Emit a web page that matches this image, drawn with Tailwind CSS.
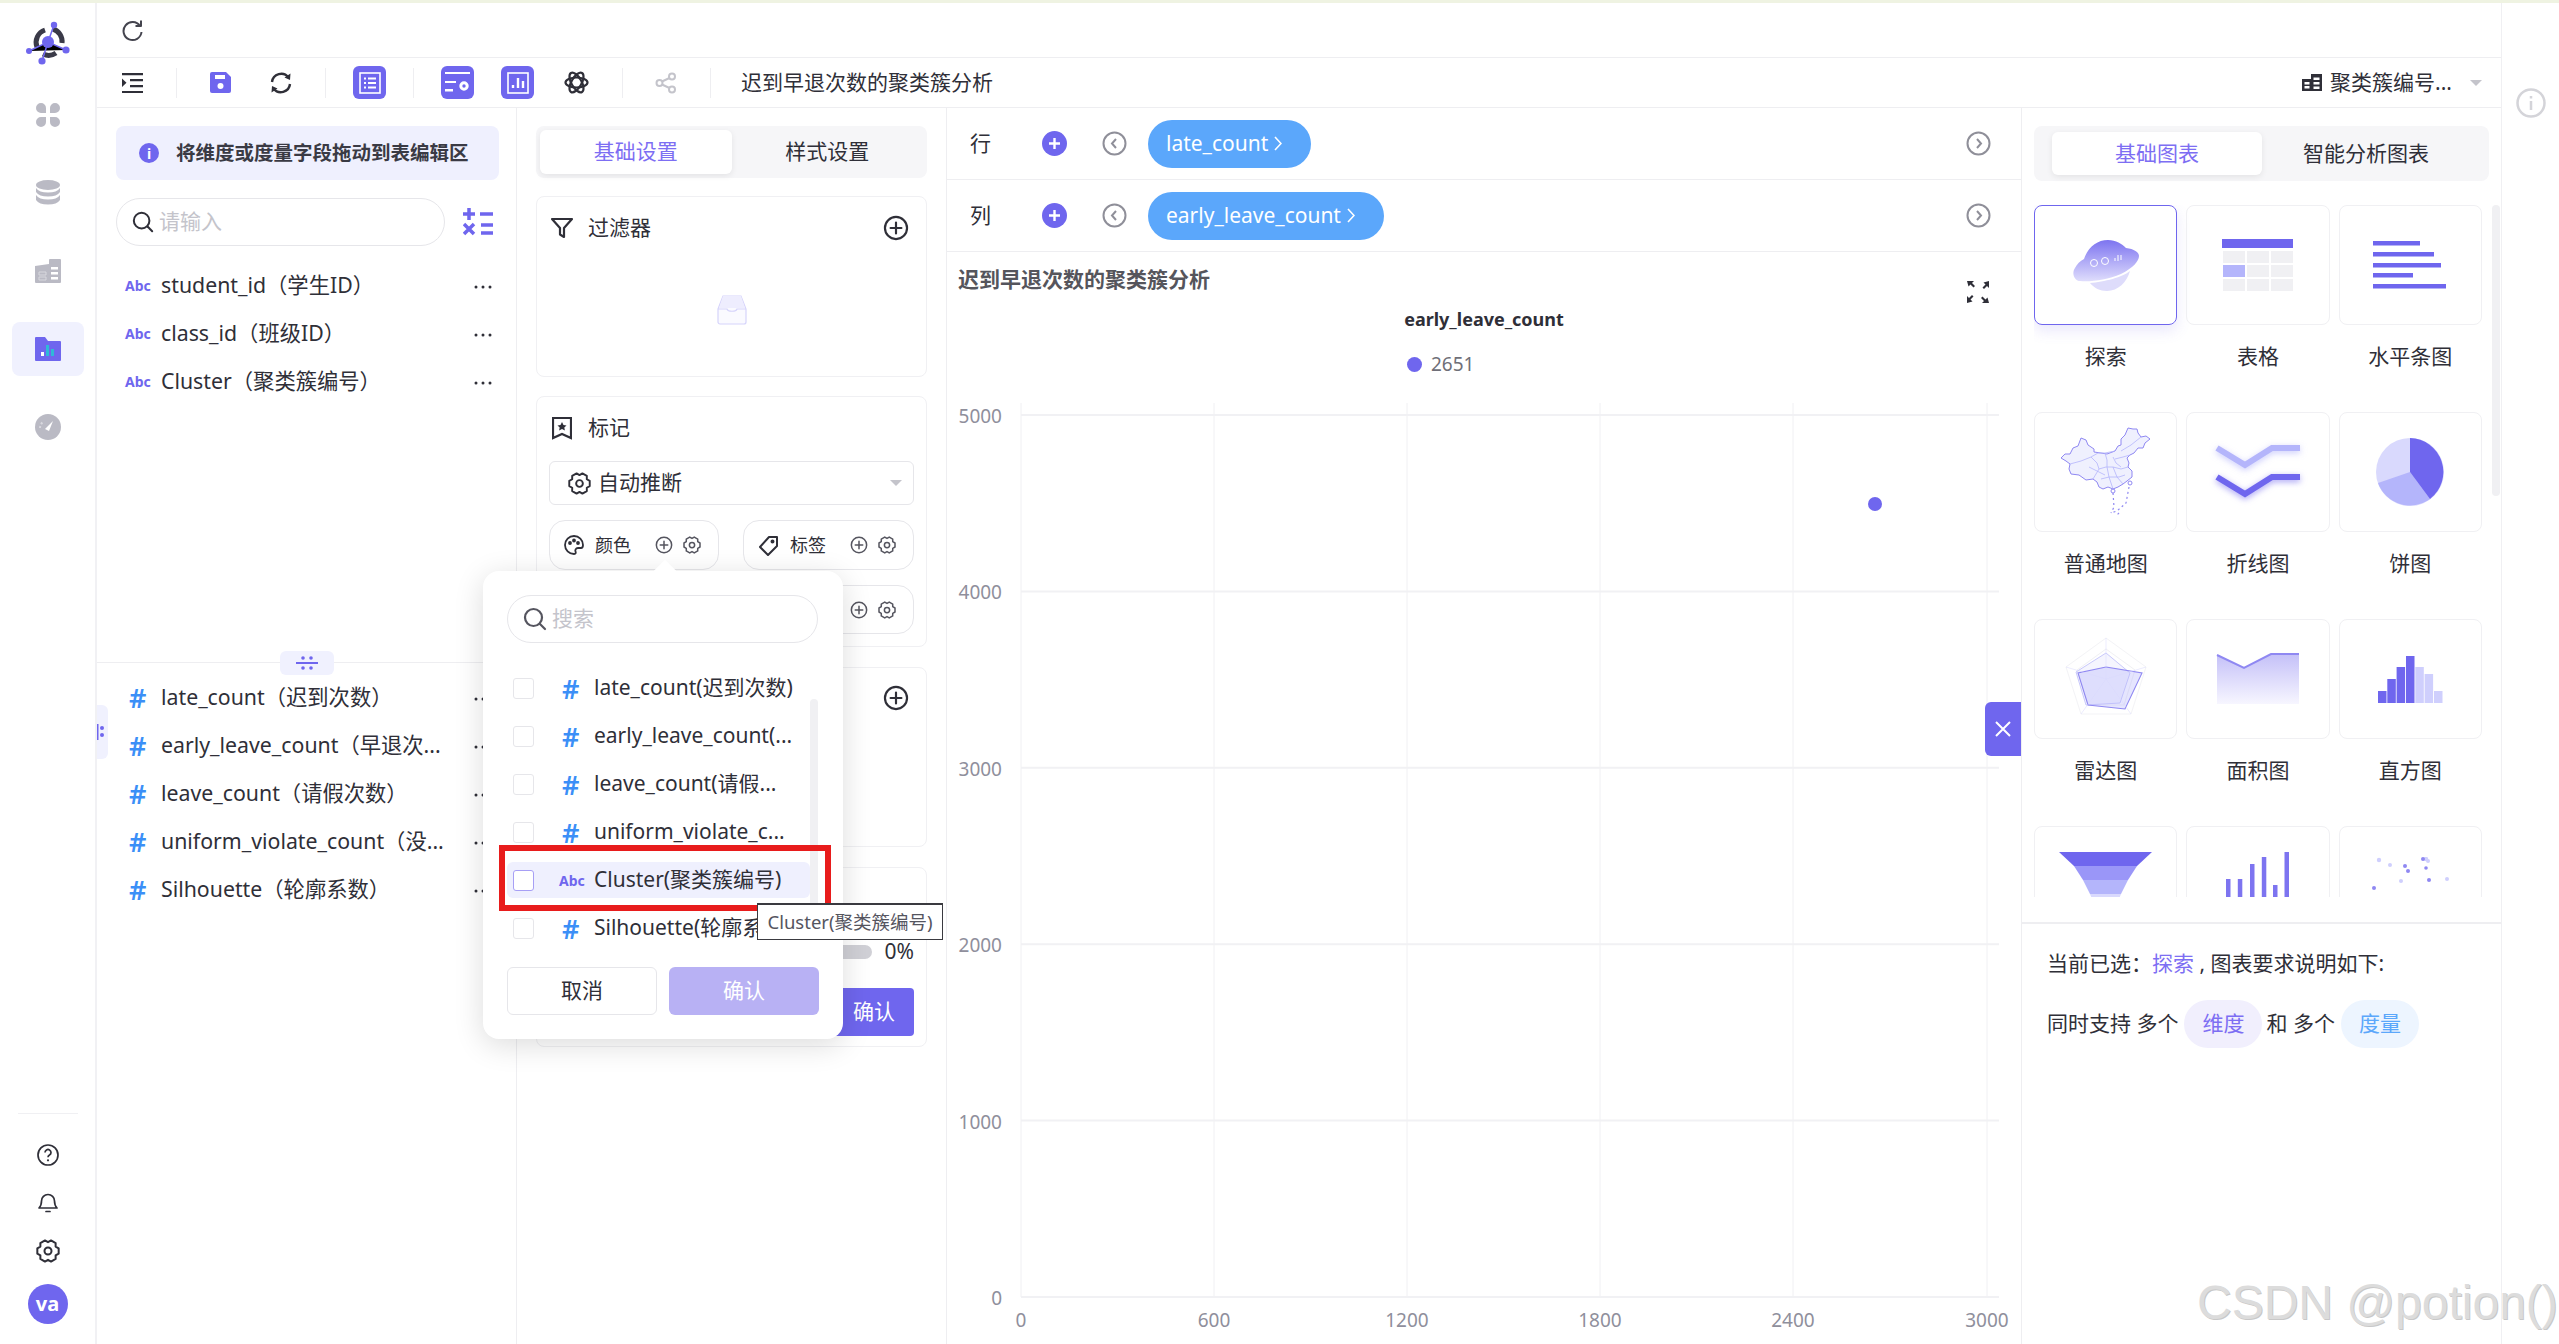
<!DOCTYPE html>
<html lang="zh">
<head>
<meta charset="UTF-8">
<title>迟到早退次数的聚类簇分析</title>
<script src="https://cdn.jsdelivr.net/npm/@tailwindcss/browser@4"></script>
</head>
<body class="bg-white text-[#2f2f38] [font-family:'Noto_Sans','Noto_Sans_CJK_SC',sans-serif]">

<!-- shared icons -->
<svg class="hidden">
  <symbol id="gear" viewBox="0 0 24 24"><path d="M22.670 9.340V14.660L19.620 16.400 19.640 19.910 15.030 22.570 12 20.800 8.970 22.570 4.360 19.910 4.380 16.400 1.330 14.660V9.340L4.380 7.600 4.360 4.090 8.970 1.430 12 3.200 15.030 1.430 19.640 4.090 19.620 7.600z" fill="none" stroke="currentColor" stroke-width="2" stroke-linejoin="round"/><circle cx="12" cy="12" r="3.500" fill="none" stroke="currentColor" stroke-width="2"/></symbol>
  <symbol id="plus-o" viewBox="0 0 24 24"><circle cx="12" cy="12" r="10.200" fill="none" stroke="currentColor" stroke-width="2"/><path d="M12 7v10M7 12h10" stroke="currentColor" stroke-width="2" stroke-linecap="round"/></symbol>
  <symbol id="dots" viewBox="0 0 18 4"><circle cx="2" cy="2" r="1.500" fill="currentColor"/><circle cx="9" cy="2" r="1.500" fill="currentColor"/><circle cx="16" cy="2" r="1.500" fill="currentColor"/></symbol>
  <symbol id="search" viewBox="0 0 24 24"><circle cx="10.500" cy="10.500" r="8.500" fill="none" stroke="currentColor" stroke-width="2.200"/><path d="M17 17l5 5" stroke="currentColor" stroke-width="2.200" stroke-linecap="round"/></symbol>
</svg>

<div class="relative w-[2559px] h-[1344px] overflow-hidden">
  <div class="h-[3px] bg-[#eff3e2]"></div>

  <div class="flex h-[1341px]">
    <!-- sidebar -->
    <aside class="w-[97px] shrink-0 border-r-2 border-[#f1f1f4] flex flex-col items-center">
      <svg class="mt-[18px] w-[46px] h-[46px]" viewBox="0 0 46 46">
        <path d="M12 26a13 13 0 0 1 8-17M28 8a13 13 0 0 1 9 14M31 32a13 13 0 0 1-13 1" fill="none" stroke="#3a3a48" stroke-width="5"/>
        <path d="M29 4L23 21M4 30l19-9 18 8M17 40l6-19" stroke="#6f66ee" stroke-width="1.500"/>
        <circle cx="23" cy="21" r="6" fill="#6f66ee"/><circle cx="29" cy="4" r="3.200" fill="#6f66ee"/><circle cx="41" cy="29" r="3.600" fill="#6f66ee"/><circle cx="4" cy="30" r="3" fill="#6f66ee"/><circle cx="17" cy="40" r="3.600" fill="#6f66ee"/>
      </svg>
      <svg class="mt-[35px] w-[26px] h-[26px]" viewBox="0 0 26 26" fill="#babac4"><path d="M1 6a5 5 0 0 1 10 0v5H6a5 5 0 0 1-5-5zM15 6a5 5 0 0 1 10 0 5 5 0 0 1-5 5h-5zM1 20a5 5 0 0 1 5-5h5v5a5 5 0 0 1-10 0zM15 15h5a5 5 0 0 1 0 10 5 5 0 0 1-5-5z"/></svg>
      <svg class="mt-[52px] w-[26px] h-[26px]" viewBox="0 0 26 26" fill="#babac4"><ellipse cx="13" cy="5" rx="12" ry="5"/><path d="M1 8c2 3 6 4.500 12 4.500S23 11 25 8v4c-2 3-6 4.500-12 4.500S3 15 1 12zM1 15c2 3 6 4.500 12 4.500S23 18 25 15v5c-2 3-6 4.500-12 4.500S3 23 1 20z"/></svg>
      <svg class="mt-[53px] w-[26px] h-[24px]" viewBox="0 0 26 24"><path d="M0 7l14-2V1a1 1 0 0 1 1-1h10a1 1 0 0 1 1 1v22a1 1 0 0 1-1 1H1a1 1 0 0 1-1-1z" fill="#babac4"/><path d="M16 8h7v2.500h-7zM16 13h7v2.500h-7zM16 18h7v2.500h-7z" fill="#fff"/><path d="M4 13h7v3H4zM4 18h7v3H4z" fill="none" stroke="#d8d8de"/></svg>
      <div class="mt-[39px] w-[72px] h-[54px] rounded-lg bg-[#f0f1fe] flex items-center justify-center">
        <svg class="w-[26px] h-[24px]" viewBox="0 0 26 24"><path d="M0 1a1 1 0 0 1 1-1h9l3 4h12a1 1 0 0 1 1 1v18a1 1 0 0 1-1 1H1a1 1 0 0 1-1-1z" fill="#6f66ee"/><rect x="6" y="15" width="3" height="4" fill="#fff"/><rect x="11" y="8" width="3" height="11" fill="#2fb9d8"/><rect x="16" y="12" width="3" height="7" fill="#2fb9d8"/></svg>
      </div>
      <svg class="mt-[38px] w-[26px] h-[26px]" viewBox="0 0 26 26"><circle cx="13" cy="13" r="13" fill="#babac4"/><path d="M10 15l8-8-4 10z" fill="#fff"/><path d="M5 14a8 8 0 0 1 3-6" stroke="#d8d8de" stroke-width="2" fill="none" stroke-dasharray="2 2"/></svg>

      <div class="mt-auto w-[60px] border-t border-[#f0f0f3]"></div>
      <svg class="mt-[30px] w-[22px] h-[22px] text-[#2f2f38]" viewBox="0 0 22 22"><circle cx="11" cy="11" r="10" fill="none" stroke="currentColor" stroke-width="1.700"/><path d="M8 8.500a3 3 0 1 1 4.500 2.600c-1 .6-1.500 1.100-1.500 2.200" fill="none" stroke="currentColor" stroke-width="1.700"/><circle cx="11" cy="16.300" r="1.100" fill="currentColor"/></svg>
      <svg class="mt-[25px] w-[22px] h-[22px] text-[#2f2f38]" viewBox="0 0 22 22" fill="none" stroke="currentColor" stroke-width="1.700"><path d="M2 17h18c-2-2-2.500-4-2.500-7a6.500 6.500 0 0 0-13 0c0 3-.5 5-2.500 7z" stroke-linejoin="round"/><path d="M9 20.500h4" stroke-linecap="round"/></svg>
      <svg class="mt-[26px] w-[24px] h-[24px] text-[#2f2f38]"><use href="#gear"/></svg>
      <div class="mt-[21px] mb-[20px] w-[40px] h-[40px] rounded-full bg-[#6f66ee] text-white font-bold text-[20px] flex items-center justify-center">va</div>
    </aside>

    <!-- main -->
    <div class="w-[2405px] shrink-0 border-r border-[#f0f0f3] flex flex-col">
      <div class="h-[55px] shrink-0 border-b border-[#eeeef1] flex items-center pl-[23px]">
        <svg class="w-[24px] h-[24px] text-[#44444e]" viewBox="0 0 24 24" fill="none" stroke="currentColor" stroke-width="2"><path d="M20 8a9 9 0 1 0 1.500 6"/><path d="M21 2.500V8h-5.500" stroke-linejoin="round"/></svg>
      </div>

      <!-- toolbar -->
      <div class="h-[50px] shrink-0 border-b border-[#eeeef1] flex items-center relative">
        <svg class="ml-[25px] w-[21px] h-[20px] text-[#2f2f38]" viewBox="0 0 21 20" fill="currentColor"><path d="M0 0h21v2.200H0zM8 6h13v2.200H8zM8 12h13v2.200H8zM0 18h21v2H0zM0 5.500l4.500 4.300L0 14z"/></svg>
        <div class="ml-[33px] w-px h-[30px] bg-[#eeeef1]"></div>
        <svg class="ml-[33px] w-[21px] h-[21px]" viewBox="0 0 21 21"><path d="M2 0h14l5 5v14a2 2 0 0 1-2 2H2a2 2 0 0 1-2-2V2a2 2 0 0 1 2-2z" fill="#6f66ee"/><rect x="5" y="3" width="10" height="4" fill="#fff"/><circle cx="10.500" cy="14" r="3" fill="#fff"/></svg>
        <svg class="ml-[38px] w-[24px] h-[24px] text-[#2f2f38]" viewBox="0 0 24 24" fill="none" stroke="currentColor" stroke-width="2.400"><path d="M3 11A9.200 9.200 0 0 1 19.500 6.500M21 13A9.200 9.200 0 0 1 4.500 17.500"/><path d="M21.500 2.500l-.5 6.500-5.500-2.500zM2.500 21.500l.5-6.500 5.500 2.500z" fill="currentColor" stroke="none"/></svg>
        <div class="ml-[32px] w-px h-[30px] bg-[#eeeef1]"></div>
        <div class="ml-[27px] w-[33px] h-[33px] rounded-md bg-[#6f66ee] flex items-center justify-center">
          <svg class="w-[22px] h-[22px]" viewBox="0 0 22 22" fill="none" stroke="#fff" stroke-width="1.600"><rect x="1" y="1" width="20" height="20"/><path d="M5 6.500h2M9 6.500h8M5 11h2M9 11h8M5 15.500h2M9 15.500h8" stroke-width="2"/></svg>
        </div>
        <div class="ml-[27px] w-px h-[30px] bg-[#eeeef1]"></div>
        <div class="ml-[27px] w-[33px] h-[33px] rounded-md bg-[#6f66ee] flex items-center justify-center">
          <svg class="w-[25px] h-[22px]" viewBox="0 0 25 22" fill="#fff"><path d="M0 0h25v2H0zM0 9h11v2H0zM0 17h8v2.500H0z"/><circle cx="19" cy="14" r="3.200" fill="none" stroke="#fff" stroke-width="3"/></svg>
        </div>
        <div class="ml-[27px] w-[33px] h-[33px] rounded-md bg-[#6f66ee] flex items-center justify-center">
          <svg class="w-[22px] h-[22px]" viewBox="0 0 22 22" fill="none" stroke="#fff" stroke-width="1.600"><rect x="1" y="1" width="20" height="20"/><path d="M6 16v-3M11 16V6M16 16V9" stroke-width="2.400"/></svg>
        </div>
        <svg class="ml-[30px] w-[25px] h-[25px] text-[#2f2f38]" viewBox="0 0 25 25" fill="none" stroke="currentColor" stroke-width="2.200"><ellipse cx="12.500" cy="12.500" rx="11" ry="5" /><ellipse cx="12.500" cy="12.500" rx="11" ry="5" transform="rotate(60 12.500 12.500)"/><ellipse cx="12.500" cy="12.500" rx="11" ry="5" transform="rotate(120 12.500 12.500)"/></svg>
        <div class="ml-[33px] w-px h-[30px] bg-[#eeeef1]"></div>
        <svg class="ml-[32px] w-[22px] h-[22px] text-[#c4c4cb]" viewBox="0 0 22 22" fill="none" stroke="currentColor" stroke-width="2"><circle cx="4.500" cy="11" r="3"/><circle cx="17" cy="4.500" r="3"/><circle cx="17" cy="17.500" r="3"/><path d="M7 9.500l7.500-3.500M7 12.500l7.500 3.500"/></svg>
        <div class="ml-[33px] w-px h-[30px] bg-[#eeeef1]"></div>
        <span class="ml-[30px] text-[21px] leading-none">迟到早退次数的聚类簇分析</span>
        <div class="ml-auto mr-[19px] flex items-center">
          <svg class="w-[20px] h-[17px] text-[#2f2f38]" viewBox="0 0 20 17"><path d="M0 5h9V0h11v17H0z" fill="currentColor"/><path d="M11.500 3.500h6V6h-6zM11.500 8h6v2.500h-6zM11.500 12.500h6V15h-6zM2.500 8h5v2.500h-5zM2.500 12h5v2.500h-5z" fill="#fff"/></svg>
          <span class="ml-[8px] text-[21px] leading-none w-[122px] whitespace-nowrap">聚类簇编号...</span>
          <span class="ml-[18px] w-0 h-0 border-x-[6px] border-x-transparent border-t-[6px] border-t-[#c4c4cb]"></span>
        </div>
      </div>

      <!-- workspace -->
      <div class="flex flex-1 min-h-0">
        <!-- fields -->
        <div class="w-[420px] shrink-0 border-r border-[#eeeef1] flex flex-col">
          <div class="h-[555px] shrink-0 border-b border-[#eeeef1] pl-[19px] pt-[18px]">
            <div class="w-[383px] h-[54px] rounded-lg bg-[#eff0fe] flex items-center pl-[23px]">
              <span class="w-[20px] h-[20px] rounded-full bg-[#6f66ee] text-white text-[14px] font-bold flex items-center justify-center">i</span>
              <span class="ml-[17px] text-[19.500px] font-bold whitespace-nowrap text-[#3a3a44]">将维度或度量字段拖动到表编辑区</span>
            </div>
            <div class="mt-[18px] flex items-center">
              <div class="w-[329px] h-[48px] rounded-full border border-[#e6e6ea] flex items-center pl-[15px]">
                <svg class="w-[22px] h-[22px] text-[#2f2f38]"><use href="#search"/></svg>
                <span class="ml-[5px] text-[21px] text-[#c4c4cb]">请输入</span>
              </div>
              <svg class="ml-[18px] w-[30px] h-[30px] text-[#6f66ee]" viewBox="0 0 30 30" fill="none" stroke="currentColor" stroke-width="3.500"><path d="M0 7h12M6 1v12M17 7h13M1 17l10 10M11 17L1 27M18 18h12M18 26h12"/></svg>
            </div>
            <div class="mt-[15px] -ml-[19px]">
              <div class="h-[48px] flex items-center pl-[28px] pr-[24px]"><span class="w-[36px] text-[#6f66ee] text-[14px] font-bold">Abc</span><span class="text-[21.300px] whitespace-nowrap">student_id（学生ID）</span><svg class="ml-auto w-[18px] h-[4px] mt-[4px]"><use href="#dots"/></svg></div>
              <div class="h-[48px] flex items-center pl-[28px] pr-[24px]"><span class="w-[36px] text-[#6f66ee] text-[14px] font-bold">Abc</span><span class="text-[21.300px] whitespace-nowrap">class_id（班级ID）</span><svg class="ml-auto w-[18px] h-[4px] mt-[4px]"><use href="#dots"/></svg></div>
              <div class="h-[48px] flex items-center pl-[28px] pr-[24px]"><span class="w-[36px] text-[#6f66ee] text-[14px] font-bold">Abc</span><span class="text-[21.300px] whitespace-nowrap">Cluster（聚类簇编号）</span><svg class="ml-auto w-[18px] h-[4px] mt-[4px]"><use href="#dots"/></svg></div>
            </div>
          </div>
          <div class="pt-[10px]">
            <div class="h-[48px] flex items-center pl-[32px] pr-[24px]"><span class="w-[32px] text-[#3b8ff7] text-[27px] font-semibold leading-none">#</span><span class="text-[21.300px] whitespace-nowrap">late_count（迟到次数）</span><svg class="ml-auto w-[18px] h-[4px] mt-[4px]"><use href="#dots"/></svg></div>
            <div class="h-[48px] flex items-center pl-[32px] pr-[24px]"><span class="w-[32px] text-[#3b8ff7] text-[27px] font-semibold leading-none">#</span><span class="text-[21.300px] whitespace-nowrap">early_leave_count（早退次...</span><svg class="ml-auto w-[18px] h-[4px] mt-[4px]"><use href="#dots"/></svg></div>
            <div class="h-[48px] flex items-center pl-[32px] pr-[24px]"><span class="w-[32px] text-[#3b8ff7] text-[27px] font-semibold leading-none">#</span><span class="text-[21.300px] whitespace-nowrap">leave_count（请假次数）</span><svg class="ml-auto w-[18px] h-[4px] mt-[4px]"><use href="#dots"/></svg></div>
            <div class="h-[48px] flex items-center pl-[32px] pr-[24px]"><span class="w-[32px] text-[#3b8ff7] text-[27px] font-semibold leading-none">#</span><span class="text-[21.300px] whitespace-nowrap">uniform_violate_count（没...</span><svg class="ml-auto w-[18px] h-[4px] mt-[4px]"><use href="#dots"/></svg></div>
            <div class="h-[48px] flex items-center pl-[32px] pr-[24px]"><span class="w-[32px] text-[#3b8ff7] text-[27px] font-semibold leading-none">#</span><span class="text-[21.300px] whitespace-nowrap">Silhouette（轮廓系数）</span><svg class="ml-auto w-[18px] h-[4px] mt-[4px]"><use href="#dots"/></svg></div>
          </div>
        </div>

        <!-- settings -->
        <div class="w-[430px] shrink-0 border-r border-[#eeeef1] px-[19px] pt-[18px]">
          <div class="h-[52px] rounded-lg bg-[#f6f6f8] p-[4px] flex">
            <div class="w-[192px] rounded-md bg-white shadow-[0_2px_6px_rgba(0,0,0,0.08)] text-[#7d6ef3] text-[21px] flex items-center justify-center">基础设置</div>
            <div class="w-[192px] text-[21px] flex items-center justify-center">样式设置</div>
          </div>

          <div class="mt-[18px] h-[181px] rounded-lg border border-[#f0f0f3] pl-[14px] pr-[17px]">
            <div class="h-[62px] flex items-center">
              <svg class="w-[22px] h-[22px] text-[#2f2f38]" viewBox="0 0 22 22" fill="none" stroke="currentColor" stroke-width="2.200"><path d="M1 2h20l-8 9v9l-4-2.500V11z" stroke-linejoin="round"/></svg>
              <span class="ml-[15px] text-[21px]">过滤器</span>
              <svg class="ml-auto w-[26px] h-[26px] text-[#2f2f38]"><use href="#plus-o"/></svg>
            </div>
            <div class="flex justify-center mt-[35px] pl-[3px]">
              <svg class="w-[38px] h-[32px]" viewBox="0 0 38 32" fill="none"><path d="M5 15L10 2h18l5 13v13a2 2 0 0 1-2 2H7a2 2 0 0 1-2-2z" fill="#fafaff" stroke="#d6d4fb" stroke-width="1.200"/><path d="M5 15h9c1 3 9 3 10 0h9" stroke="#d6d4fb" stroke-width="1.200"/><path d="M10 2h18l4 12H6z" fill="#eeedfe"/></svg>
            </div>
          </div>

          <div class="mt-[19px] h-[251px] rounded-lg border border-[#f0f0f3] px-[12px]">
            <div class="h-[62px] flex items-center pl-[3px]">
              <svg class="w-[20px] h-[23px] text-[#2f2f38]" viewBox="0 0 20 23" fill="none" stroke="currentColor" stroke-width="2.200"><path d="M1 1h18v20l-9-4-9 4z"/><path d="M10 5l1.500 3 3 .4-2.200 2.100.6 3-2.900-1.500-2.900 1.500.6-3L5.500 8.400l3-.4z" fill="currentColor" stroke="none"/></svg>
              <span class="ml-[16px] text-[21px]">标记</span>
            </div>
            <div class="mt-[2px] h-[44px] rounded-md border border-[#e6e6ea] flex items-center pl-[18px] pr-[11px]">
              <svg class="w-[23px] h-[23px] text-[#2f2f38]"><use href="#gear"/></svg>
              <span class="ml-[7px] text-[21px]">自动推断</span>
              <span class="ml-auto w-0 h-0 border-x-[6px] border-x-transparent border-t-[6px] border-t-[#c4c4cb]"></span>
            </div>
            <div class="mt-[15px] flex justify-between">
              <div class="w-[170px] h-[50px] rounded-2xl border border-[#e6e6ea] flex items-center pl-[14px]">
                <svg class="w-[20px] h-[20px] text-[#2f2f38]" viewBox="0 0 20 20" fill="none" stroke="currentColor" stroke-width="1.800"><path d="M10 1a9 9 0 0 0 0 18c2 0 2-1.500 1.500-2.500S11.500 13 14 13h3c1.500 0 2-1 2-3a9 9 0 0 0-9-9z"/><circle cx="6" cy="8" r="1" fill="currentColor"/><circle cx="10" cy="5.500" r="1" fill="currentColor"/><circle cx="14" cy="8" r="1" fill="currentColor"/></svg>
                <span class="ml-[11px] text-[18px]">颜色</span>
                <svg class="ml-[24px] w-[18px] h-[18px] text-[#55555f]"><use href="#plus-o"/></svg>
                <svg class="ml-[10px] w-[18px] h-[18px] text-[#55555f]"><use href="#gear"/></svg>
              </div>
              <div class="w-[171px] h-[50px] rounded-2xl border border-[#e6e6ea] flex items-center pl-[14px]">
                <svg class="w-[21px] h-[21px] text-[#2f2f38]" viewBox="0 0 21 21" fill="none" stroke="currentColor" stroke-width="2"><path d="M19 2v9l-9 9-8-8 9-10z" stroke-linejoin="round"/><circle cx="14.500" cy="6.500" r="1" fill="currentColor"/></svg>
                <span class="ml-[11px] text-[18px]">标签</span>
                <svg class="ml-[24px] w-[18px] h-[18px] text-[#55555f]"><use href="#plus-o"/></svg>
                <svg class="ml-[10px] w-[18px] h-[18px] text-[#55555f]"><use href="#gear"/></svg>
              </div>
            </div>
            <div class="mt-[15px] flex justify-end">
              <div class="w-[171px] h-[49px] rounded-2xl border border-[#e6e6ea] flex items-center justify-end pr-[17px]">
                <svg class="w-[18px] h-[18px] text-[#55555f]"><use href="#plus-o"/></svg>
                <svg class="ml-[10px] w-[18px] h-[18px] text-[#55555f]"><use href="#gear"/></svg>
              </div>
            </div>
          </div>

          <div class="mt-[20px] h-[180px] rounded-lg border border-[#f0f0f3] pr-[17px] flex justify-end pt-[17px]">
            <svg class="w-[26px] h-[26px] text-[#2f2f38]"><use href="#plus-o"/></svg>
          </div>

          <div class="mt-[20px] h-[180px] rounded-lg border border-[#f0f0f3] px-[12px] flex flex-col items-end">
            <div class="mt-[73px] flex items-center">
              <div class="w-[120px] h-[14px] rounded-full bg-[#d0d0d6]"></div>
              <span class="ml-[13px] text-[21px] leading-none">0%</span>
            </div>
            <div class="mt-[26px] w-[120px] h-[48px] rounded bg-[#6f66ee] text-white text-[21px] flex items-center justify-center pl-[40px]">确认</div>
          </div>
        </div>

        <!-- chart -->
        <div class="w-[1075px] shrink-0 border-r border-[#eeeef1] flex flex-col">
          <div class="h-[72px] shrink-0 border-b border-[#eeeef1] flex items-center pl-[23px] pr-[30px]">
            <span class="text-[21px] w-[36px]">行</span>
            <span class="ml-[36px] w-[25px] h-[25px] rounded-full bg-[#6f66ee] text-white flex items-center justify-center"><svg class="w-[13px] h-[13px]" viewBox="0 0 13 13"><path d="M6.500 1v11M1 6.500h11" stroke="#fff" stroke-width="2.400"/></svg></span>
            <svg class="ml-[35px] w-[25px] h-[25px] text-[#8f8f99]" viewBox="0 0 25 25" fill="none" stroke="currentColor" stroke-width="2"><circle cx="12.500" cy="12.500" r="11"/><path d="M14 8l-4 4.500 4 4.500"/></svg>
            <div class="ml-[21px] w-[163px] h-[48px] rounded-full bg-[#5ba7fb] text-white text-[21px] flex items-center pl-[18px]">late_count<svg class="ml-[6px] w-[8px] h-[15px]" viewBox="0 0 8 15" fill="none" stroke="#fff" stroke-width="1.600"><path d="M1 1l6 6.500-6 6.500"/></svg></div>
            <svg class="ml-auto w-[25px] h-[25px] text-[#8f8f99]" viewBox="0 0 25 25" fill="none" stroke="currentColor" stroke-width="2"><circle cx="12.500" cy="12.500" r="11"/><path d="M11 8l4 4.500-4 4.500"/></svg>
          </div>
          <div class="h-[72px] shrink-0 border-b border-[#eeeef1] flex items-center pl-[23px] pr-[30px]">
            <span class="text-[21px] w-[36px]">列</span>
            <span class="ml-[36px] w-[25px] h-[25px] rounded-full bg-[#6f66ee] text-white flex items-center justify-center"><svg class="w-[13px] h-[13px]" viewBox="0 0 13 13"><path d="M6.500 1v11M1 6.500h11" stroke="#fff" stroke-width="2.400"/></svg></span>
            <svg class="ml-[35px] w-[25px] h-[25px] text-[#8f8f99]" viewBox="0 0 25 25" fill="none" stroke="currentColor" stroke-width="2"><circle cx="12.500" cy="12.500" r="11"/><path d="M14 8l-4 4.500 4 4.500"/></svg>
            <div class="ml-[21px] w-[236px] h-[48px] rounded-full bg-[#5ba7fb] text-white text-[21px] flex items-center pl-[18px]">early_leave_count<svg class="ml-[6px] w-[8px] h-[15px]" viewBox="0 0 8 15" fill="none" stroke="#fff" stroke-width="1.600"><path d="M1 1l6 6.500-6 6.500"/></svg></div>
            <svg class="ml-auto w-[25px] h-[25px] text-[#8f8f99]" viewBox="0 0 25 25" fill="none" stroke="currentColor" stroke-width="2"><circle cx="12.500" cy="12.500" r="11"/><path d="M11 8l4 4.500-4 4.500"/></svg>
          </div>
          <div class="flex-1 flex flex-col relative">
            <div class="h-[53px] shrink-0 flex pl-[11px] pr-[31px] pt-[13px]">
              <span class="text-[21px] leading-[28px] font-bold text-[#55555c]">迟到早退次数的聚类簇分析</span>
              <svg class="ml-auto mt-[15px] w-[24px] h-[24px] text-[#2f2f38]" viewBox="0 0 24 24" fill="currentColor"><path d="M1 1h7L6 3l3 3-1.500 1.500-3-3-2 2zM23 1v7l-2-2-3 3L16.500 7.500l3-3-2-2zM1 23v-7l2 2 3-3 1.500 1.500-3 3 2 2zM23 23h-7l2-2-3-3 1.500-1.500 3 3 2-2z"/></svg>
            </div>
            <div class="h-[28px] shrink-0 text-center text-[18px] leading-[28px] font-bold">early_leave_count</div>
            <div class="h-[28px] mt-[17px] shrink-0 flex items-center pl-[460px] text-[19px] text-[#6f6f78]"><span class="w-[15px] h-[15px] rounded-full bg-[#6f66ee]"></span><span class="ml-[9px]">2651</span></div>
            <svg class="mt-[12px] shrink-0" width="1074" height="954" viewBox="947 390 1074 954" font-size="19" fill="#8f8f9c">
              <g stroke="#f0f0f3" stroke-width="1">
                <path d="M1021 403V1297M1214 403V1297M1407 403V1297M1600 403V1297M1793 403V1297M1987 403V1297"/>
              </g>
              <g stroke="#f1f1f4" stroke-width="2">
                <path d="M1021 415H1999M1021 591.400H1999M1021 767.800H1999M1021 944.200H1999M1021 1120.600H1999M1021 1297H1999"/>
              </g>
              <g text-anchor="end">
                <text x="1002" y="423">5000</text><text x="1002" y="599">4000</text><text x="1002" y="776">3000</text><text x="1002" y="952">2000</text><text x="1002" y="1129">1000</text><text x="1002" y="1305">0</text>
              </g>
              <g text-anchor="middle">
                <text x="1021" y="1327">0</text><text x="1214" y="1327">600</text><text x="1407" y="1327">1200</text><text x="1600" y="1327">1800</text><text x="1793" y="1327">2400</text><text x="1987" y="1327">3000</text>
              </g>
              <circle cx="1875" cy="504" r="7" fill="#6f66ee"/>
            </svg>
          </div>
        </div>

        <!-- chart types -->
        <div class="w-[479px] shrink-0 pl-[12px] pt-[18px] flex flex-col relative">
          <div class="w-[455px] h-[55px] rounded-lg bg-[#f6f6f8] pt-[6px] pl-[18px] flex">
            <div class="w-[210px] h-[43px] rounded-md bg-white shadow-[0_2px_6px_rgba(0,0,0,0.08)] text-[#7d6ef3] text-[21px] flex items-center justify-center">基础图表</div>
            <div class="w-[208px] h-[43px] text-[21px] flex items-center justify-center">智能分析图表</div>
          </div>

          <div class="mt-[24px] w-[448px] h-[692px] overflow-hidden grid grid-cols-3 gap-x-[9px] auto-rows-[207px] content-start text-[21px]">
            <div>
              <div class="h-[120px] rounded-lg border border-[#6f66ee] shadow-[0_6px_14px_rgba(111,102,238,0.15)] flex items-center justify-center">
                <svg width="66" height="51" viewBox="0 0 66 51">
                  <defs><linearGradient id="planet" x1="0" y1="0" x2="0" y2="1"><stop offset="0" stop-color="#7d74f0"/><stop offset="1" stop-color="#dfddfc"/></linearGradient></defs>
                  <path d="M11 19C15 7 24 0 35 0c8 0 14 4 18 8 8 1 13 4 13 8 0 5-6 12-18 18-14 6-30 8-41 7C2 41-2 34 2 28c2-4 5-7 9-9z" fill="url(#planet)"/>
                  <path d="M17 43c14-1 33-6 40-12-3 11-12 20-23 20-7 0-13-3-17-8z" fill="#dedcfb"/>
                  <g fill="none" stroke="#fff" stroke-width="1"><circle cx="21" cy="23" r="3.500"/><circle cx="32" cy="21" r="3.500"/><path d="M42 21v-3M45 21v-6M48 20v-5"/></g>
                </svg>
              </div>
              <div class="h-[64px] flex items-center justify-center">探索</div>
            </div>
            <div>
              <div class="h-[120px] rounded-lg border border-[#f0f0f3] flex items-center justify-center">
                <svg width="71" height="52" viewBox="0 0 71 52">
                  <rect width="71" height="9" fill="#6f66ee"/>
                  <g fill="#f0f0f3"><rect x="1" y="12" width="22" height="12"/><rect x="25" y="12" width="22" height="12"/><rect x="49" y="12" width="22" height="12"/><rect x="25" y="26" width="22" height="12"/><rect x="49" y="26" width="22" height="12"/><rect x="1" y="40" width="22" height="12"/><rect x="25" y="40" width="22" height="12"/><rect x="49" y="40" width="22" height="12"/></g>
                  <rect x="1" y="26" width="22" height="12" fill="#b4b5fb"/>
                </svg>
              </div>
              <div class="h-[64px] flex items-center justify-center">表格</div>
            </div>
            <div>
              <div class="h-[120px] rounded-lg border border-[#f0f0f3] flex items-center justify-center">
                <svg width="74" height="48" viewBox="0 0 74 48" fill="#6f66ee"><rect width="47" height="4.500"/><rect y="11" width="61" height="4.500"/><rect y="22" width="68" height="4.500"/><rect y="32" width="40" height="4.500"/><rect y="43" width="73" height="4.500"/></svg>
              </div>
              <div class="h-[64px] flex items-center justify-center">水平条图</div>
            </div>

            <div>
              <div class="h-[120px] rounded-lg border border-[#f0f0f3] flex items-center justify-center">
                <svg width="90" height="90" viewBox="0 0 90 90">
                  <path d="M0 31L4 27 9 27 12 21 17 19 20 11 25 13 27 18 33 22 33 25 40 26 46 27 54 24 57 19 60 18 60 12 64 8 67 1 72 2 76 2 77 6 80 10 85 9 89 12 84 16 82 21 77 21 73 26 69 28 66 31 68 36 67 40 71 44 71 50 66 54 62 57 57 60 52 62 47 60 42 62 38 60 36 55 32 52 25 53 18 48 10 47 8 42 9 37 5 34z" fill="#eff0fe" stroke="#8f88f2" stroke-width="1" stroke-linejoin="round"/>
                  <path d="M9 37L20 34 30 30 36 36 38 42 32 52M30 30L37 26 44 26 54 24M38 42L45 40 52 40 60 42 67 40M44 26L46 33 46 40 48 50 52 62M52 40L56 50 62 57M60 24L70 18 80 10M54 32L62 30 69 28M28 40L36 44 44 48M40 52L48 50 58 50 64 48M52 30L55 36 60 40" fill="none" stroke="#b4b5fb" stroke-width=".800"/>
                  <circle cx="52" cy="64" r="2" fill="none" stroke="#8f88f2"/><circle cx="69" cy="56" r="2" fill="none" stroke="#8f88f2"/>
                  <path d="M52 66l1 14-3 6M68 60l-3 16-9 8-6 2M58 86l-2 2" fill="none" stroke="#8f88f2" stroke-width="1.200" stroke-dasharray="2 3"/>
                </svg>
              </div>
              <div class="h-[64px] flex items-center justify-center">普通地图</div>
            </div>
            <div>
              <div class="h-[120px] rounded-lg border border-[#f0f0f3] flex items-center justify-center">
                <svg width="84" height="56" viewBox="0 0 84 56" fill="none" class="overflow-visible" stroke-width="6">
                  <path d="M1 4l28 17L56 4h28" stroke="#b4b5fb" class="[filter:drop-shadow(0_2px_3px_rgba(180,181,251,0.7))]"/>
                  <path d="M1 33l28 17L56 33h28" stroke="#6f66ee" class="[filter:drop-shadow(0_2px_3px_rgba(111,102,238,0.6))]"/>
                </svg>
              </div>
              <div class="h-[64px] flex items-center justify-center">折线图</div>
            </div>
            <div>
              <div class="h-[120px] rounded-lg border border-[#f0f0f3] flex items-center justify-center">
                <svg width="68" height="68" viewBox="0 0 68 68">
                  <circle cx="34" cy="34" r="34" fill="#d9d9fd"/>
                  <path d="M34 34L54 61A34 34 0 0 1 2 45z" fill="#b4b5fb"/>
                  <path d="M34 34V0A34 34 0 0 1 54 61z" fill="#6f66ee"/>
                </svg>
              </div>
              <div class="h-[64px] flex items-center justify-center">饼图</div>
            </div>

            <div>
              <div class="h-[120px] rounded-lg border border-[#f0f0f3] flex items-center justify-center">
                <svg width="84" height="84" viewBox="0 0 84 84">
                  <path d="M42 1L82 30 67 77H17L2 30z" fill="none" stroke="#f3f3f6"/>
                  <path d="M42 12L71 33 60 68H24L13 33z" fill="none" stroke="#f0f0f3"/>
                  <path d="M42 16L66 36 56 66 22 68 12 35z" fill="#d9d9fd" fill-opacity=".25" stroke="#c9c9fb"/>
                  <path d="M42 30L78 36 61 72 24 68 14 36z" fill="#b4b5fb" fill-opacity=".35" stroke="#8f88f2" stroke-width="1.100"/>
                  <path d="M42 1V42M82 30L42 42M67 77L42 42M17 77L42 42M2 30L42 42" stroke="#d9d9fd" stroke-width=".500" fill="none"/>
                </svg>
              </div>
              <div class="h-[64px] flex items-center justify-center">雷达图</div>
            </div>
            <div>
              <div class="h-[120px] rounded-lg border border-[#f0f0f3] flex items-center justify-center">
                <svg width="84" height="52" viewBox="0 0 84 52">
                  <defs><linearGradient id="area" x1="0" y1="0" x2="0" y2="1"><stop offset="0" stop-color="#c4c0f8"/><stop offset="1" stop-color="#f7f6ff"/></linearGradient></defs>
                  <path d="M1 2L28 15 55 1H83V51H1z" fill="url(#area)"/>
                  <path d="M1 2L28 15 55 1H83" fill="none" stroke="#8f88f2" stroke-width="2"/>
                </svg>
              </div>
              <div class="h-[64px] flex items-center justify-center">面积图</div>
            </div>
            <div>
              <div class="h-[120px] rounded-lg border border-[#f0f0f3] flex items-center justify-center">
                <svg width="65" height="47" viewBox="0 0 65 47" fill="#6f66ee"><rect y="35" width="8.500" height="12"/><rect x="9.300" y="23" width="8.500" height="24"/><rect x="18.600" y="11" width="8.500" height="36"/><rect x="28" y="0" width="8.500" height="47"/><g fill="#cfcffd"><rect x="37.300" y="11" width="8.500" height="36"/><rect x="46.600" y="18" width="8.500" height="29"/><rect x="56" y="35" width="8.500" height="12"/></g></svg>
              </div>
              <div class="h-[64px] flex items-center justify-center">直方图</div>
            </div>

            <div>
              <div class="h-[120px] rounded-lg border border-[#f0f0f3] flex justify-center pt-[25px]">
                <svg width="93" height="60" viewBox="0 0 93 60"><path d="M0 0H93L78 14H15z" fill="#6f66ee"/><path d="M15 14H78L69 28H24z" fill="#9a96f8"/><path d="M24 28H69L62 42H31z" fill="#b4b5fb"/><path d="M31 42H62L58 52H35z" fill="#d9d9fd"/></svg>
              </div>
            </div>
            <div>
              <div class="h-[120px] rounded-lg border border-[#f0f0f3] flex justify-center items-end pb-[49px]">
                <svg width="64" height="44" viewBox="0 0 64 44" class="overflow-visible" fill="#7d74f0"><rect y="27" width="4.500" height="30"/><rect x="11.800" y="27" width="4.500" height="30"/><rect x="24" y="12" width="4.500" height="40"/><rect x="35.800" y="5" width="4.500" height="50"/><rect x="47" y="33" width="4.500" height="30"/><rect x="58.500" y="0" width="4.500" height="50"/></svg>
              </div>
            </div>
            <div>
              <div class="h-[120px] rounded-lg border border-[#f0f0f3] flex justify-center pt-[30px]">
                <svg width="80" height="36" viewBox="0 0 80 36"><g fill="#cfcffd"><circle cx="9" cy="3" r="2.200"/><circle cx="20" cy="8" r="2"/><circle cx="56" cy="2" r="2.200"/><circle cx="58" cy="4" r="2"/><circle cx="31" cy="24" r="2"/><circle cx="77" cy="22" r="2"/></g><g fill="#8f88f2"><circle cx="35" cy="9" r="2"/><circle cx="38" cy="14" r="2"/><circle cx="53" cy="2" r="2"/><circle cx="56" cy="11" r="1.800"/><circle cx="59" cy="23" r="2"/><circle cx="4" cy="31" r="2"/></g></svg>
              </div>
            </div>
          </div>

          <div class="mt-[25px] -ml-[12px] border-t-2 border-[#eeeef1] pl-[25px] text-[21px]">
            <div class="mt-[25px] h-[28px] leading-[28px] whitespace-nowrap">当前已选：<span class="text-[#7d6ef3]">探索</span> , 图表要求说明如下:</div>
            <div class="mt-[23px] flex items-center whitespace-nowrap h-[48px]">同时支持 多个<span class="ml-[6px] w-[78px] h-[48px] rounded-full bg-[#f1effd] text-[#7d6ef3] flex items-center justify-center">维度</span><span class="ml-[4px]">和 多个</span><span class="ml-[6px] w-[78px] h-[48px] rounded-full bg-[#edf5ff] text-[#5ba7fb] flex items-center justify-center">度量</span></div>
          </div>

          <div class="absolute right-[1px] top-[97px] w-[8px] h-[291px] rounded bg-[#f0f0f3]"></div>
        </div>
      </div>
    </div>

    <!-- right rail -->
    <div class="flex-1 flex justify-center pt-[85px]">
      <svg class="w-[30px] h-[30px] text-[#d4d4d9]" viewBox="0 0 30 30" fill="none" stroke="currentColor" stroke-width="2.500"><circle cx="15" cy="15" r="13.500"/><path d="M15 13v9M15 8v2.500"/></svg>
    </div>
  </div>

  <!-- column handles -->
  <div class="absolute left-[280px] top-[651px] w-[54px] h-[24px] rounded-md bg-[#f0f1fe] flex items-center justify-center">
    <svg width="22" height="14" viewBox="0 0 22 14" fill="#6f66ee"><circle cx="7" cy="2" r="1.800"/><circle cx="15" cy="2" r="1.800"/><circle cx="7" cy="12" r="1.800"/><circle cx="15" cy="12" r="1.800"/><rect y="6" width="22" height="2"/></svg>
  </div>
  <div class="absolute left-[97px] top-[705px] w-[11px] h-[54px] rounded-r-md bg-[#f0f1fe] flex items-center">
    <svg width="8" height="16" viewBox="0 0 8 16" fill="#6f66ee"><rect width="1.500" height="16"/><circle cx="5" cy="4" r="2"/><circle cx="5" cy="11" r="2"/></svg>
  </div>
  <div class="absolute left-[1985px] top-[702px] w-[36px] h-[54px] rounded-l-md bg-[#6f66ee] flex items-center justify-center">
    <svg width="16" height="16" viewBox="0 0 16 16"><path d="M1 1l14 14M15 1L1 15" stroke="#fff" stroke-width="2"/></svg>
  </div>

  <!-- field picker popover -->
  <div class="absolute left-[483px] top-[571px] w-[360px] h-[468px] rounded-2xl bg-white shadow-[0_6px_30px_rgba(0,0,0,0.14)] px-[24px] pt-[24px]">
    <div class="absolute -top-[8px] left-[174px] w-[16px] h-[16px] rotate-45 bg-white"></div>
    <div class="relative h-[48px] w-[311px] rounded-full border border-[#e6e6ea] flex items-center pl-[15px]">
      <svg class="w-[24px] h-[24px] text-[#55555f]"><use href="#search"/></svg>
      <span class="ml-[5px] text-[21px] text-[#c4c4cb]">搜索</span>
    </div>
    <div class="relative mt-[21px] h-[288px] text-[21px]">
      <div class="h-[48px] flex items-center pl-[6px]"><span class="w-[21px] h-[21px] rounded-[3px] border border-[#e6e6ea]"></span><span class="ml-[28px] w-[32px] text-[#3b8ff7] text-[27px] font-semibold leading-none">#</span>late_count(迟到次数)</div>
      <div class="h-[48px] flex items-center pl-[6px]"><span class="w-[21px] h-[21px] rounded-[3px] border border-[#e6e6ea]"></span><span class="ml-[28px] w-[32px] text-[#3b8ff7] text-[27px] font-semibold leading-none">#</span>early_leave_count(...</div>
      <div class="h-[48px] flex items-center pl-[6px]"><span class="w-[21px] h-[21px] rounded-[3px] border border-[#e6e6ea]"></span><span class="ml-[28px] w-[32px] text-[#3b8ff7] text-[27px] font-semibold leading-none">#</span>leave_count(请假...</div>
      <div class="h-[48px] flex items-center pl-[6px]"><span class="w-[21px] h-[21px] rounded-[3px] border border-[#e6e6ea]"></span><span class="ml-[28px] w-[32px] text-[#3b8ff7] text-[27px] font-semibold leading-none">#</span>uniform_violate_c...</div>
      <div class="mt-[6px] mb-[6px] h-[36px] w-[303px] rounded-md bg-[#eff0fe] flex items-center pl-[6px]"><span class="w-[21px] h-[21px] rounded-[3px] border border-[#a79ff5] bg-white"></span><span class="ml-[25px] w-[35px] text-[#6f66ee] text-[14px] font-bold">Abc</span>Cluster(聚类簇编号)</div>
      <div class="h-[48px] flex items-center pl-[6px] whitespace-nowrap"><span class="w-[21px] h-[21px] rounded-[3px] border border-[#e6e6ea]"></span><span class="ml-[28px] w-[32px] text-[#3b8ff7] text-[27px] font-semibold leading-none">#</span>Silhouette(轮廓系数)</div>
      <div class="absolute left-[303px] top-[35px] w-[8px] h-[234px] rounded bg-[#f0f0f3]"></div>
    </div>
    <div class="relative mt-[15px] flex justify-between w-[312px] text-[21px]">
      <div class="w-[150px] h-[48px] rounded-md border border-[#e6e6ea] flex items-center justify-center">取消</div>
      <div class="w-[150px] h-[48px] rounded-md bg-[#b8b1f4] text-white flex items-center justify-center">确认</div>
    </div>
  </div>

  <!-- annotation and tooltip -->
  <div class="absolute left-[499px] top-[845px] w-[332px] h-[66px] border-[6px] border-[#e81c1c]"></div>
  <div class="absolute left-[757px] top-[903px] w-[186px] h-[37px] bg-white border border-[#3a3a40] border-t-2 flex items-center justify-center text-[18.500px] text-[#55555f] whitespace-nowrap">Cluster(聚类簇编号)</div>

  <div class="absolute left-[2197px] top-[1271px] text-[48px] leading-[64px] text-[#dcdcdc] [font-family:'Liberation_Sans',sans-serif] [text-shadow:1px_1px_0_#c8c8c8]">CSDN @potion()</div>
</div>
</body>
</html>
